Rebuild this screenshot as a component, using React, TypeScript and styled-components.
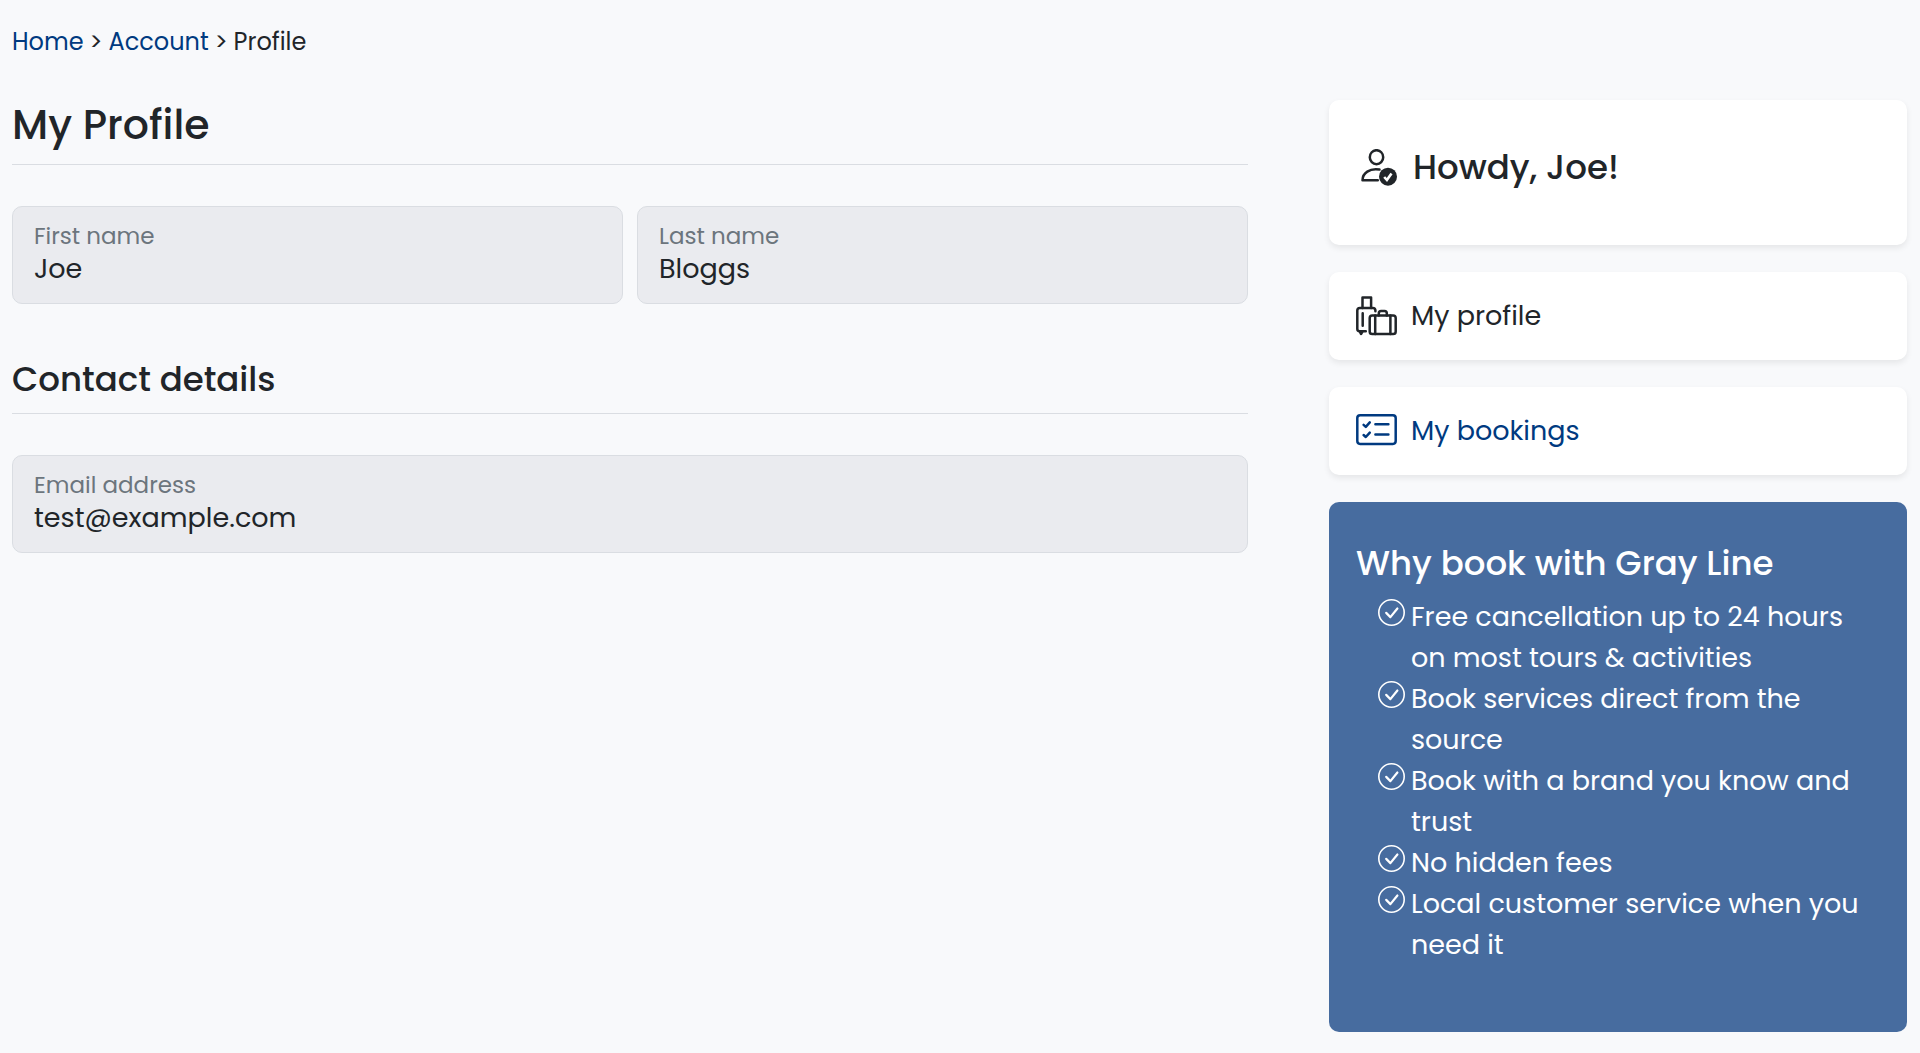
import * as React from "react";
import styled, { createGlobalStyle, css } from "styled-components";

const $ink = "#212529";
const $navy = "#003a80";
const $line = "#dadde2";

const GlobalStyle = createGlobalStyle`
  * {
    box-sizing: border-box;
  }
  body {
    margin: 0;
    background: #f8f9fb;
    color: ${$ink};
    font-family: Poppins, Inter, sans-serif;
    font-size: 27px;
    line-height: 36px;
  }
`;

const Page = styled.div`
  padding: 24px 13px 20px 12px;
`;

const Breadcrumb = styled.nav`
  display: flex;
  gap: 6px;
  margin-bottom: 40px;
  font-size: 24px;
  line-height: 36px;
`;

const Link = styled.a`
  color: ${$navy};
  text-decoration: none;
`;

const Columns = styled.div`
  display: grid;
  grid-template-columns: minmax(0, 1236fr) minmax(0, 578fr);
  column-gap: 81px;
  align-items: start;
`;

const headingRule = css`
  margin: 0 0 41px;
  padding-bottom: 14px;
  border-bottom: 1px solid ${$line};
  font-weight: 500;
`;

const PageTitle = styled.h1`
  ${headingRule}
  font-size: 41px;
  line-height: 50px;
`;

const SectionTitle = styled.h2`
  ${headingRule}
  margin-top: 55px;
  font-size: 34px;
  line-height: 40px;
`;

const FieldRow = styled.div`
  display: flex;
  gap: 14px;
`;

const FieldBox = styled.div`
  flex: 1;
  min-width: 0;
  padding: 14px 21px 16px;
  background: #eaebef;
  border: 1px solid ${$line};
  border-radius: 10px;
`;

const FieldLabel = styled.label`
  display: block;
  color: #6c757d;
  font-size: 23px;
  line-height: 30px;
`;

const FieldInput = styled.input`
  display: block;
  width: 100%;
  height: 36px;
  padding: 0;
  border: 0;
  outline: 0;
  background: transparent;
  color: inherit;
  font: inherit;
`;

const Sidebar = styled.aside`
  display: flex;
  flex-direction: column;
  gap: 27px;
`;

const cardBase = css`
  border-radius: 10px;
  background: #fff;
  box-shadow: 0 3px 6px rgba(0, 0, 0, 0.08);
`;

const Greeting = styled.section`
  ${cardBase}
  display: flex;
  align-items: center;
  gap: 16px;
  padding: 47px 27px 57px 32px;
`;

const CardTitle = styled.h2`
  margin: 0;
  font-size: 34px;
  font-weight: 500;
  line-height: 41px;
`;

const MenuCard = styled.a<{ $active?: boolean }>`
  ${cardBase}
  display: flex;
  align-items: center;
  gap: 14px;
  padding: 26px 27px;
  color: ${(props) => (props.$active ? $ink : $navy)};
  text-decoration: none;
  svg {
    flex: none;
    margin: -4px 0;
  }
`;

const WhyCard = styled.section`
  padding: 41px 27px 67px;
  border-radius: 10px;
  background: #476c9f;
  color: #fff;
`;

const WhyList = styled.ul`
  margin: 12px 0 0;
  padding: 0 0 0 22px;
  list-style: none;
`;

const WhyItem = styled.li`
  display: flex;
  gap: 6px;
  line-height: 41px;
  svg {
    flex: none;
    margin-top: 3px;
  }
`;

const UserCheckIcon = () => (
  <svg width="36" height="38" viewBox="0 0 36 38" fill="none" stroke="currentColor" strokeWidth="2.5" aria-hidden="true">
    <ellipse cx="15.5" cy="8.2" rx="6.7" ry="7" />
    <path d="M18.5 20.6C8.5 19 1.6 24 1.5 31.2h15.3" strokeLinecap="round" strokeLinejoin="round" />
    <circle cx="27" cy="27.7" r="9" fill="currentColor" stroke="none" />
    <path d="m23.2 28 2.7 3 4.6-6.6" stroke="#fff" strokeWidth="2.6" />
  </svg>
);

const LuggageIcon = () => (
  <svg width="41" height="40" viewBox="0 0 41 40" fill="none" stroke="currentColor" strokeWidth="2.5" strokeLinecap="round" strokeLinejoin="round" aria-hidden="true">
    <path d="M6.5 12V1.6h8.6V12" />
    <path d="M19.4 15.2v-.6c0-1.6-1-2.6-2.6-2.6H3.9c-1.6 0-2.6 1-2.6 2.6V33c0 1.4.9 2.2 2.3 2.2h6.2" />
    <path d="M6.7 17.2v12.6M4 36l1 2 1.2-2" />
    <rect x="13.7" y="19.4" width="26" height="18.6" rx="2.6" />
    <path d="M19.2 19.4V38M34.4 19.4V38M22.8 19.4v-2.2c0-1.4 1-2.3 2.3-2.3h3.4c1.4 0 2.3.9 2.3 2.3v2.2" />
  </svg>
);

const ChecklistIcon = () => (
  <svg width="41" height="34" viewBox="0 0 41 34" fill="none" stroke="currentColor" strokeWidth="2.5" strokeLinecap="round" strokeLinejoin="round" aria-hidden="true">
    <rect x="1.3" y="1.3" width="38.4" height="28.6" rx="2.8" />
    <path d="m7.6 10.8 2.2 2 4-4.4M7.6 21l2.2 2 4-4.4M19.4 10.2h13M19.4 20.4h13" />
  </svg>
);

const CheckCircleIcon = () => (
  <svg width="27" height="27" viewBox="0 0 27 27" fill="none" stroke="currentColor" aria-hidden="true">
    <circle cx="13.5" cy="13.5" r="12.7" strokeWidth="1.6" />
    <path d="m8.2 13.9 4.2 4.2 7-8.6" strokeWidth="2.2" strokeLinecap="round" strokeLinejoin="round" />
  </svg>
);

type FieldProps = { id: string; label: string; value: string; type?: string };

function Field({ id, label, value, type = "text" }: FieldProps) {
  return (
    <FieldBox>
      <FieldLabel htmlFor={id}>{label}</FieldLabel>
      <FieldInput id={id} type={type} value={value} readOnly />
    </FieldBox>
  );
}

const reasons = [
  "Free cancellation up to 24 hours on most tours & activities",
  "Book services direct from the source",
  "Book with a brand you know and trust",
  "No hidden fees",
  "Local customer service when you need it"
];

export default function App() {
  return (
    <Page>
      <GlobalStyle />
      <Breadcrumb aria-label="Breadcrumb">
        <Link href="#home">Home</Link>
        <span>&gt;</span>
        <Link href="#account">Account</Link>
        <span>&gt;</span>
        <span>Profile</span>
      </Breadcrumb>
      <Columns>
        <main>
          <PageTitle>My Profile</PageTitle>
          <FieldRow>
            <Field id="first-name" label="First name" value="Joe" />
            <Field id="last-name" label="Last name" value="Bloggs" />
          </FieldRow>
          <SectionTitle>Contact details</SectionTitle>
          <FieldRow>
            <Field id="email" label="Email address" value="test@example.com" type="email" />
          </FieldRow>
        </main>
        <Sidebar>
          <Greeting>
            <UserCheckIcon />
            <CardTitle>Howdy, Joe!</CardTitle>
          </Greeting>
          <MenuCard href="#profile" $active>
            <LuggageIcon />
            My profile
          </MenuCard>
          <MenuCard href="#bookings">
            <ChecklistIcon />
            My bookings
          </MenuCard>
          <WhyCard>
            <CardTitle>Why book with Gray Line</CardTitle>
            <WhyList>
              {reasons.map((reason) => (
                <WhyItem key={reason}>
                  <CheckCircleIcon />
                  <span>{reason}</span>
                </WhyItem>
              ))}
            </WhyList>
          </WhyCard>
        </Sidebar>
      </Columns>
    </Page>
  );
}
